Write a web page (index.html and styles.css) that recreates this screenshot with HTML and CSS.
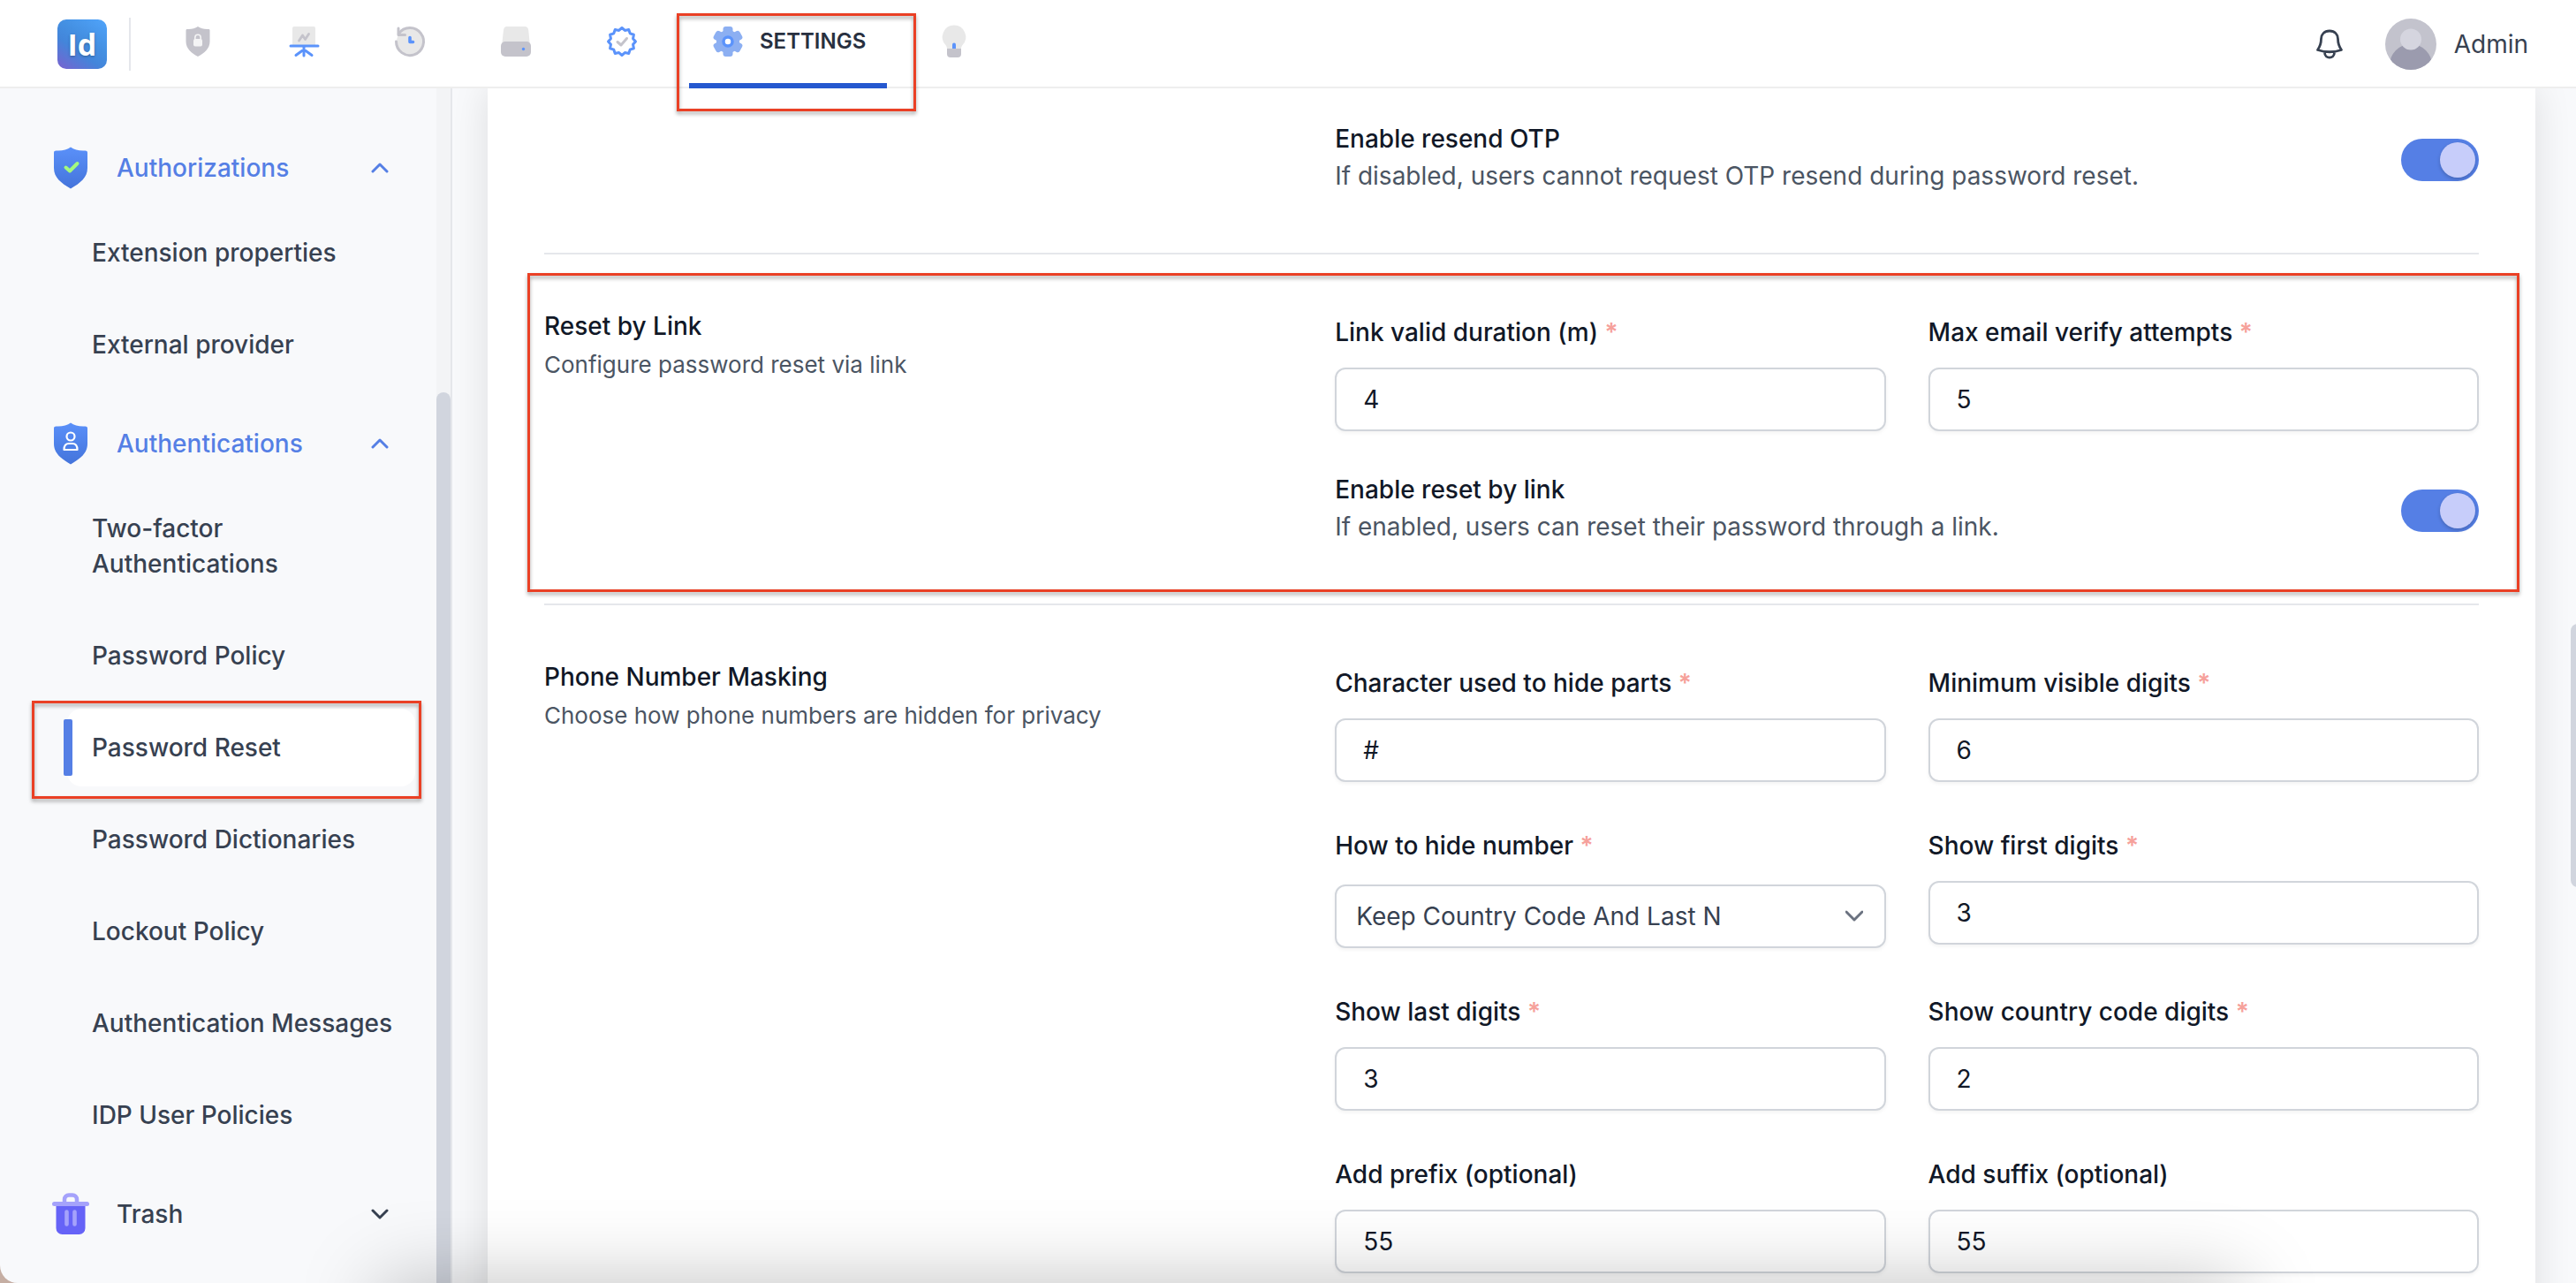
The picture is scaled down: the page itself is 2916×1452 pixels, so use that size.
FILE: index.html
```
<!DOCTYPE html>
<html lang="en">
<head>
    <meta charset="UTF-8">
    <meta name="viewport" content="width=device-width, initial-scale=1.0">
    <title>Settings - Password Reset</title>
    <link rel="stylesheet" href="styles.css">
</head>
<body>
<div class="app">
    <header class="topbar">
        <a href="#" class="logo">Id</a>
        <nav class="tabs">
            <a href="#" class="tab" aria-label="Security">
                <svg class="tab-icon" viewBox="0 0 40 40">
                    <path d="M20 3c3 2 8 3.500 12 3c1 0 1.500.5 1.500 1.500V20c0 8-6 13-13.500 17C12.500 33 6.500 28 6.500 20V7.500C6.500 6.500 7 6 8 6c4 .5 9-1 12-3z" fill="#c4c3cb"/>
                    <path d="M16.800 18v-2.500a3.200 3.200 0 0 1 6.400 0V18" fill="none" stroke="#f4f4f5" stroke-width="1.600"/>
                    <rect x="15" y="17" width="10" height="8.500" rx="2" fill="#f4f4f5"/>
                </svg>
            </a>
            <a href="#" class="tab" aria-label="Reports">
                <svg class="tab-icon" viewBox="0 0 40 40">
                    <path d="M9 3h22a2 2 0 0 1 2 2v19H7V5a2 2 0 0 1 2-2z" fill="#e8e8e8"/>
                    <path d="M14.500 19l4-6 3 4.500 4-6" fill="none" stroke="#c4c3cb" stroke-width="2.800" stroke-linecap="round" stroke-linejoin="round"/>
                    <path d="M5 25h31M20 26v10M20 29l-9 6.500M20 29l9 6.500" fill="none" stroke="#5b93fb" stroke-width="3" stroke-linecap="round"/>
                </svg>
            </a>
            <a href="#" class="tab" aria-label="History">
                <svg class="tab-icon" viewBox="0 0 40 40">
                    <circle cx="20" cy="20" r="15" fill="#e8e8e8"/>
                    <path d="M4.500 20a15.500 15.500 0 1 0 2.800-8.800" fill="none" stroke="#c4c3cb" stroke-width="3" stroke-linecap="round"/>
                    <path d="M7 5v7.500h7.500" fill="none" stroke="#c4c3cb" stroke-width="3" stroke-linecap="round" stroke-linejoin="round"/>
                    <path d="M20 15.500v5h3.500" fill="none" stroke="#5b93fb" stroke-width="3.600" stroke-linecap="round" stroke-linejoin="round"/>
                </svg>
            </a>
            <a href="#" class="tab" aria-label="Storage">
                <svg class="tab-icon" viewBox="0 0 40 40">
                    <path d="M10 3h20c2.500 0 3.800 1.500 4.200 4L36 25H4L6 7c.4-2.500 1.500-4 4-4z" fill="#e8e8e8"/>
                    <rect x="3" y="20" width="34" height="17" rx="5" fill="#c4c3cb"/>
                    <circle cx="28.500" cy="28.500" r="1.700" fill="#5b93fb"/>
                </svg>
            </a>
            <a href="#" class="tab" aria-label="Verification">
                <svg class="tab-icon" viewBox="0 0 40 40">
                    <path d="M20 4.500L23.360 7.440L27.750 6.580L29.190 10.810L33.420 12.250L32.560 16.640L35.500 20L32.560 23.360L33.420 27.750L29.190 29.190L27.750 33.420L23.360 32.560L20 35.500L16.640 32.560L12.250 33.420L10.810 29.190L6.580 27.750L7.440 23.360L4.500 20L7.440 16.640L6.580 12.250L10.810 10.810L12.250 6.580L16.640 7.440z" fill="none" stroke="#5b93fb" stroke-width="3" stroke-linejoin="round"/>
                    <path d="M15 20.500l4 3.500 6.500-7.500" fill="none" stroke="#c4c3cb" stroke-width="3" stroke-linecap="round" stroke-linejoin="round"/>
                </svg>
            </a>
            <a href="#" class="tab tab-active">
                <svg class="tab-icon" viewBox="0 0 40 40">
                    <g fill="#8caff2">
                        <circle cx="20" cy="20" r="13"/>
                        <rect x="14.500" y="3" width="11" height="34" rx="3"/>
                        <rect x="14.500" y="3" width="11" height="34" rx="3" transform="rotate(60 20 20)"/>
                        <rect x="14.500" y="3" width="11" height="34" rx="3" transform="rotate(120 20 20)"/>
                    </g>
                    <circle cx="20" cy="20" r="5" fill="#fff" stroke="#5b93fb" stroke-width="3.500"/>
                </svg>
                <span>SETTINGS</span>
                <span class="mark mark-tab"></span>
            </a>
            <a href="#" class="tab" aria-label="Tips">
                <svg class="tab-icon" viewBox="0 0 40 40">
                    <path d="M20 1.500a13.300 13.300 0 0 1 9.500 22.500c-1.200 1.500-1.500 3-1.500 5H12c0-2-.3-3.500-1.500-5A13.300 13.300 0 0 1 20 1.500z" fill="#e8e8e8"/>
                    <path d="M18 28v-4.500a2 2 0 0 1 4 0V28z" fill="#5b93fb"/>
                    <path d="M12 28h16v6a4 4 0 0 1-4 4h-8a4 4 0 0 1-4-4z" fill="#c4c3cb"/>
                </svg>
            </a>
        </nav>
        <div class="account">
            <button type="button" class="bell" aria-label="Notifications">
                <svg viewBox="0 0 36 40">
                    <path d="M18 5C12 5 8.500 9 8.500 14C8.500 20 7 23 4.500 26.500Q18 31 31.500 26.500C29 23 27.500 20 27.500 14C27.500 9 24 5 18 5zM12.500 29.500C12.500 37 23.500 37 23.500 29.500" fill="none" stroke="#374151" stroke-width="2.800" stroke-linejoin="round"/>
                </svg>
            </button>
            <button type="button" class="user">
                <svg class="avatar" viewBox="0 0 58 58">
                    <defs><clipPath id="face"><circle cx="29" cy="29" r="29"/></clipPath></defs>
                    <g clip-path="url(#face)">
                        <rect width="58" height="58" fill="#c3c3cd"/>
                        <circle cx="29" cy="53" r="24" fill="#9b9bae"/>
                        <circle cx="29" cy="23.500" r="12" fill="#d5d5df"/>
                    </g>
                </svg>
                <span>Admin</span>
            </button>
        </div>
    </header>

    <div class="body">
        <aside class="sidebar">
            <nav class="menu">
                <div class="group">
                    <button type="button" class="group-head open">
                        <svg class="group-icon" viewBox="0 0 48 48">
                            <defs>
                                <linearGradient id="shieldFill" x1="0" y1="0" x2="0" y2="1">
                                    <stop offset="0" stop-color="#5a90f9"/>
                                    <stop offset="1" stop-color="#4474db"/>
                                </linearGradient>
                            </defs>
                            <path d="M24 .5c4 3 10 4.500 16.500 4c1.500 0 2.500.8 2.500 2.300V24c0 11-8 17-19 23.500C13 41 5 35 5 24V6.800C5 5.300 6 4.500 7.500 4.500C14 5 20 3.500 24 .5z" fill="url(#shieldFill)"/>
                            <path d="M18.500 23.500l4.500 4 8.500-8.500" fill="none" stroke="#a3f97e" stroke-width="4" stroke-linecap="round" stroke-linejoin="round"/>
                        </svg>
                        <span>Authorizations</span>
                        <svg class="chevron" viewBox="0 0 20 20"><path d="M2 14l8-8 8 8"/></svg>
                    </button>
                    <ul class="items">
                        <li><a href="#">Extension properties</a></li>
                        <li><a href="#">External provider</a></li>
                    </ul>
                </div>
                <div class="group">
                    <button type="button" class="group-head open">
                        <svg class="group-icon" viewBox="0 0 48 48">
                            <path d="M24 .5c4 3 10 4.500 16.500 4c1.500 0 2.500.8 2.500 2.300V24c0 11-8 17-19 23.500C13 41 5 35 5 24V6.800C5 5.300 6 4.500 7.500 4.500C14 5 20 3.500 24 .5z" fill="url(#shieldFill)"/>
                            <g fill="none" stroke="#fff" stroke-width="2.200">
                                <circle cx="24" cy="16" r="4.500"/>
                                <path d="M16.500 31c0-5 2.500-7 5.500-7h4c3 0 5.500 2 5.500 7z" stroke-linejoin="round"/>
                            </g>
                        </svg>
                        <span>Authentications</span>
                        <svg class="chevron" viewBox="0 0 20 20"><path d="M2 14l8-8 8 8"/></svg>
                    </button>
                    <ul class="items">
                        <li><a href="#">Two-factor Authentications</a></li>
                        <li><a href="#">Password Policy</a></li>
                        <li><a href="#" class="current">Password Reset<span class="mark mark-item"></span></a></li>
                        <li><a href="#">Password Dictionaries</a></li>
                        <li><a href="#">Lockout Policy</a></li>
                        <li><a href="#">Authentication Messages</a></li>
                        <li><a href="#">IDP User Policies</a></li>
                    </ul>
                </div>
                <div class="group">
                    <button type="button" class="group-head">
                        <svg class="group-icon" viewBox="0 0 48 48">
                            <path d="M17 12V7.500a5 5 0 0 1 5-5h4a5 5 0 0 1 5 5V12" fill="none" stroke="#a5a2fb" stroke-width="4.500"/>
                            <path d="M7.500 13h33v27a7 7 0 0 1-7 7h-19a7 7 0 0 1-7-7z" fill="#6663f7"/>
                            <rect x="3" y="10" width="42" height="5" rx="2.500" fill="#a5a2fb"/>
                            <path d="M19.500 21.500v14M28.500 21.500v14" stroke="#a5a2fb" stroke-width="4.600" stroke-linecap="round"/>
                        </svg>
                        <span>Trash</span>
                        <svg class="chevron" viewBox="0 0 20 20"><path d="M2 6l8 8 8-8"/></svg>
                    </button>
                </div>
            </nav>
            <div class="scroll-track"><div class="scroll-thumb"></div></div>
        </aside>

        <main class="content">
            <form class="card">
                <section class="section">
                    <div class="intro"></div>
                    <div class="fields">
                        <div class="switch-row">
                            <label for="resendOtp">
                                <b>Enable resend OTP</b>
                                <small>If disabled, users cannot request OTP resend during password reset.</small>
                            </label>
                            <input type="checkbox" id="resendOtp" class="switch" checked>
                        </div>
                    </div>
                </section>

                <section class="section">
                    <span class="mark mark-section"></span>
                    <div class="intro">
                        <h2>Reset by Link</h2>
                        <p>Configure password reset via link</p>
                    </div>
                    <div class="fields">
                        <div class="field">
                            <label for="linkDuration">Link valid duration (m) <i>*</i></label>
                            <input type="text" id="linkDuration" value="4">
                        </div>
                        <div class="field">
                            <label for="maxAttempts">Max email verify attempts <i>*</i></label>
                            <input type="text" id="maxAttempts" value="5">
                        </div>
                        <div class="switch-row">
                            <label for="resetByLink">
                                <b>Enable reset by link</b>
                                <small>If enabled, users can reset their password through a link.</small>
                            </label>
                            <input type="checkbox" id="resetByLink" class="switch" checked>
                        </div>
                    </div>
                </section>

                <section class="section">
                    <div class="intro">
                        <h2>Phone Number Masking</h2>
                        <p>Choose how phone numbers are hidden for privacy</p>
                    </div>
                    <div class="fields">
                        <div class="field">
                            <label for="maskChar">Character used to hide parts <i>*</i></label>
                            <input type="text" id="maskChar" value="#">
                        </div>
                        <div class="field">
                            <label for="minVisible">Minimum visible digits <i>*</i></label>
                            <input type="text" id="minVisible" value="6">
                        </div>
                        <div class="field">
                            <label for="hideMode">How to hide number <i>*</i></label>
                            <div class="select">
                                <select id="hideMode">
                                    <option>Keep Country Code And Last N</option>
                                </select>
                                <svg class="chevron" viewBox="0 0 20 20"><path d="M1 5l9 9 9-9"/></svg>
                            </div>
                        </div>
                        <div class="field">
                            <label for="firstDigits">Show first digits <i>*</i></label>
                            <input type="text" id="firstDigits" value="3">
                        </div>
                        <div class="field">
                            <label for="lastDigits">Show last digits <i>*</i></label>
                            <input type="text" id="lastDigits" value="3">
                        </div>
                        <div class="field">
                            <label for="countryDigits">Show country code digits <i>*</i></label>
                            <input type="text" id="countryDigits" value="2">
                        </div>
                        <div class="field">
                            <label for="prefix">Add prefix (optional)</label>
                            <input type="text" id="prefix" value="55">
                        </div>
                        <div class="field">
                            <label for="suffix">Add suffix (optional)</label>
                            <input type="text" id="suffix" value="55">
                        </div>
                    </div>
                </section>
            </form>
            <div class="page-thumb"></div>
        </main>
    </div>
</div>
</body>
</html>
```
FILE: styles.css
```
* {
    box-sizing: border-box;
}

html {
    background: #c5aea3;
}

body {
    margin: 0;
    font-family: Inter, "Liberation Sans", sans-serif;
    font-size: 28px;
    line-height: 40px;
    color: #111827;
}

button, input, select {
    font: inherit;
    color: inherit;
}

button {
    padding: 0;
    border: 0;
    background: none;
    cursor: pointer;
}

a {
    color: inherit;
    text-decoration: none;
}

h2, p, ul {
    margin: 0;
    padding: 0;
}

svg {
    display: block;
    flex: none;
}

.app {
    position: relative;
    display: flex;
    flex-direction: column;
    height: 100vh;
    overflow: hidden;
    background: #f8f9fb;
    border-bottom-left-radius: 20px;
}

/* shadow rising from the bottom edge */
.app::after {
    content: "";
    position: absolute;
    left: 430px;
    right: 380px;
    top: 100%;
    height: 100px;
    box-shadow: 0 0 90px rgba(0, 0, 0, 0.25);
    pointer-events: none;
    z-index: 5;
}

/* top bar */
.topbar {
    position: relative;
    z-index: 2;
    display: flex;
    flex: none;
    align-items: center;
    height: 100px;
    padding: 2px 54px 0 65px;
    background: #fff;
    border-bottom: 2px solid #eeeeee;
}

.logo {
    width: 56px;
    height: 56px;
    border-radius: 10px;
    background: linear-gradient(35deg, #7a62cf 0%, #4385da 38%, #4490e2 60%, #50a4fb 100%);
    color: #fff;
    font-family: "Open Sans", sans-serif;
    font-size: 34px;
    font-weight: 700;
    line-height: 56px;
    text-align: center;
    text-shadow: 0 1px 3px rgba(0, 0, 0, 0.3);
}

.tabs {
    display: flex;
    gap: 32px;
    margin-left: 25px;
    padding-left: 34px;
    background: linear-gradient(#e5e7eb, #e5e7eb) 0 50% / 2px 60px no-repeat;
}

.tab {
    position: relative;
    display: flex;
    align-items: center;
    gap: 16px;
    height: 100px;
    padding: 0 24px;
    border-bottom: 6px solid transparent;
    color: #283040;
    font-size: 24px;
    font-weight: 600;
}

.tab-active {
    border-color: #2558cf;
}

.tab-icon {
    width: 40px;
    height: 40px;
}

.account {
    display: flex;
    align-items: center;
    gap: 45px;
    margin-left: auto;
    color: #374151;
}

.bell svg {
    width: 36px;
    height: 40px;
}

.user {
    display: flex;
    align-items: center;
    gap: 20px;
}

.avatar {
    width: 58px;
    height: 58px;
}

/* sidebar */
.body {
    display: flex;
    flex: 1;
    min-height: 0;
}

.sidebar {
    display: flex;
    flex: none;
    width: 512px;
    overflow: hidden;
    border-right: 2px solid #e5e7eb;
    color: #374151;
    font-weight: 500;
}

.menu {
    display: flex;
    flex: 1;
    flex-direction: column;
    gap: 24px;
    padding-top: 46px;
}

.group-head {
    display: flex;
    align-items: center;
    gap: 28px;
    width: 100%;
    height: 88px;
    padding: 0 54px 0 56px;
    font-weight: 500;
}

.group-head.open {
    color: #557fe5;
}

.group-icon {
    width: 48px;
    height: 48px;
}

.chevron {
    width: 20px;
    height: 20px;
    margin-left: auto;
    fill: none;
    stroke: currentColor;
    stroke-width: 3;
    stroke-linecap: round;
    stroke-linejoin: round;
}

.items {
    display: flex;
    flex-direction: column;
    gap: 16px;
    margin-top: 8px;
    padding: 0 24px 0 76px;
    list-style: none;
}

.items a {
    position: relative;
    display: block;
    padding: 24px 16px 24px 28px;
    border-radius: 16px;
}

.items .current {
    background: #fff;
}

.current::before {
    content: "";
    position: absolute;
    left: -4px;
    top: 12px;
    bottom: 12px;
    width: 10px;
    border-radius: 2px;
    background: #557fe5;
}

.scroll-track {
    width: 16px;
    padding-top: 344px;
    background: #f3f4f6;
}

.scroll-thumb {
    height: 100%;
    border-radius: 8px 8px 0 0;
    background: #d1d5de;
}

/* content */
.content {
    position: relative;
    flex: 1;
    min-width: 0;
    padding: 0 46px 0 40px;
    overflow: hidden;
}

.page-thumb {
    position: absolute;
    right: -10px;
    top: 606px;
    width: 16px;
    height: 298px;
    border-radius: 8px;
    background: #d1d5de;
}

.card {
    padding: 0 64px;
    background: #fff;
    box-shadow: 0 0 40px rgba(0, 0, 0, 0.11);
}

.section {
    position: relative;
    display: grid;
    grid-template-columns: repeat(5, 1fr);
    column-gap: 48px;
    padding: 64px 0 63px;
    border-bottom: 2px solid #e5e7eb;
}

.section:first-child {
    padding-top: 39px;
}

.section:last-child {
    border-bottom: 0;
}

.intro {
    grid-column: span 2;
}

.intro h2 {
    font-size: 28px;
    font-weight: 500;
    line-height: 34px;
}

.intro p {
    margin-top: 8px;
    font-size: 26px;
    line-height: 38px;
    color: #4b5563;
}

.fields {
    grid-column: span 3;
    display: grid;
    grid-template-columns: 1fr 1fr;
    align-items: start;
    gap: 52px 48px;
    padding: 4px 0;
}

.field label {
    display: block;
    margin-bottom: 20px;
    font-weight: 500;
}

.field label i {
    color: #f6a19b;
    font-style: normal;
    font-weight: 600;
}

.field input, .field select {
    display: block;
    width: 100%;
    height: 72px;
    padding: 0 30px;
    border: 2px solid #d1d5db;
    border-radius: 12px;
    background: #fff;
    box-shadow: 0 2px 4px rgba(0, 0, 0, 0.05);
}

.select {
    position: relative;
    margin-top: 24px;
}

.field select {
    appearance: none;
    padding: 0 22px;
    color: #374151;
}

.select .chevron {
    position: absolute;
    right: 26px;
    top: 26px;
    color: #6b7280;
    pointer-events: none;
}

.switch-row {
    grid-column: 1 / -1;
    display: flex;
    align-items: center;
    justify-content: space-between;
}

.switch-row b {
    display: block;
    margin-bottom: 8px;
    font-weight: 500;
    line-height: 28px;
}

.switch-row small {
    display: block;
    font-size: 28px;
    color: #4b5563;
}

.switch {
    appearance: none;
    width: 88px;
    height: 48px;
    margin: 0;
    padding: 4px;
    border-radius: 24px;
    background: #d1d5db;
    cursor: pointer;
}

.switch::before {
    content: "";
    display: block;
    width: 40px;
    height: 40px;
    border-radius: 50%;
    background: #c7cdfa;
    box-shadow: 0 2px 4px rgba(0, 0, 0, 0.2);
}

.switch:checked {
    background: #557fe5;
}

.switch:checked::before {
    margin-left: auto;
}

/* red highlight frames */
.mark {
    position: absolute;
    z-index: 3;
    border: 3px solid #ea4025;
    filter: drop-shadow(0 3px 2px rgba(0, 0, 0, 0.35));
    pointer-events: none;
}

.mark-tab {
    inset: 15px -33px -32px -14px;
}

.mark-item {
    inset: -9px -7px -14px -40px;
}

.mark-section {
    inset: 21px -46px 13px -19px;
}
```
